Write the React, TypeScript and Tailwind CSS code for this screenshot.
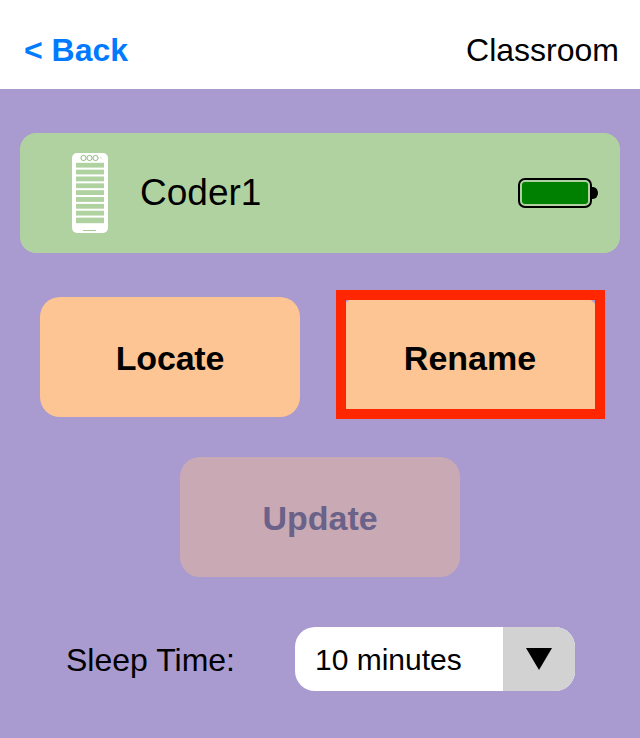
const rows = [0, 1, 2, 3, 4, 5, 6, 7, 8];

function PhoneIcon() {
  return (
    <svg width="36" height="80" viewBox="0 0 36 80" className="shrink-0">
      <rect x="0" y="0" width="36" height="80" rx="5" fill="#ffffff" />
      {rows.map((r) => (
        <rect key={r} x="4" y={9.8 + r * 6.85} width="28" height={r === 8 ? 5.6 : 4.8} fill="#b0d2a0" />
      ))}
      <circle cx="11.5" cy="5" r="2.6" fill="none" stroke="#8fb87e" strokeWidth="1" />
      <circle cx="17.5" cy="5" r="2.6" fill="none" stroke="#8fb87e" strokeWidth="1" />
      <circle cx="23.5" cy="5" r="2.6" fill="none" stroke="#8fb87e" strokeWidth="1" />
      <circle cx="29" cy="5" r="0.8" fill="#cfe3c5" />
      <rect x="11" y="77" width="13" height="1" fill="#a3ca92" />
    </svg>
  );
}

function BatteryIcon() {
  return (
    <svg width="80" height="30" viewBox="0 0 80 30" className="shrink-0">
      <path d="M73 9h2a5 6 0 0 1 0 12h-2z" fill="#000000" />
      <rect x="1" y="1" width="72" height="28" rx="6" fill="#b0d2a0" stroke="#000000" strokeWidth="2" />
      <rect x="4" y="4" width="66" height="22" rx="3" fill="#008000" />
    </svg>
  );
}

export default function App() {
  return (
    <div className="flex h-[738px] w-[640px] flex-col overflow-hidden bg-[#a99acf] font-['Liberation_Sans',Arial,sans-serif] text-black">
      <div className="flex h-[89px] items-center justify-between bg-white pl-6 pr-[21px] pt-[10px] text-[32px]">
        <span className="font-bold text-[#007aff]">&lt; Back</span>
        <span>Classroom</span>
      </div>

      <div className="mx-5 mt-11 flex h-[120px] items-center rounded-2xl bg-[#b0d2a0] pl-[52px] pr-[22px]">
        <PhoneIcon />
        <span className="ml-8 text-[37px]">Coder1</span>
        <div className="ml-auto">
          <BatteryIcon />
        </div>
      </div>

      <div className="mt-11 flex justify-center gap-10 text-[34px] font-bold">
        <button className="h-[120px] w-[260px] rounded-[20px] bg-[#fdc593] pt-[2px] tracking-[-0.2px]">Locate</button>
        <div className="relative h-[120px] w-[260px]">
          <button className="h-full w-full rounded-[20px] bg-[#fdc593] pt-[2px]">Rename</button>
          <div className="absolute left-[-4px] top-[-7px] h-[129px] w-[269px] border-[10px] border-[#ff2600]" />
        </div>
      </div>

      <button className="mx-auto mt-10 h-[120px] w-[280px] rounded-[20px] bg-[#c9a9b4] pt-[2px] text-[34px] font-bold text-[#6a6288]">
        Update
      </button>

      <div className="mt-[50px] flex items-center pl-[66px]">
        <span className="w-[229px] pt-[2px] text-[32px] whitespace-nowrap">Sleep Time:</span>
        <div className="flex h-16 w-[280px] overflow-hidden rounded-[20px] bg-white">
          <span className="flex flex-1 items-center pl-5 text-[30px]">10 minutes</span>
          <div className="flex w-[72px] items-center justify-center bg-[#d2d2d2]">
            <svg width="26" height="22" viewBox="0 0 26 22">
              <polygon points="0,0 26,0 13,22" fill="#000000" />
            </svg>
          </div>
        </div>
      </div>
    </div>
  );
}
